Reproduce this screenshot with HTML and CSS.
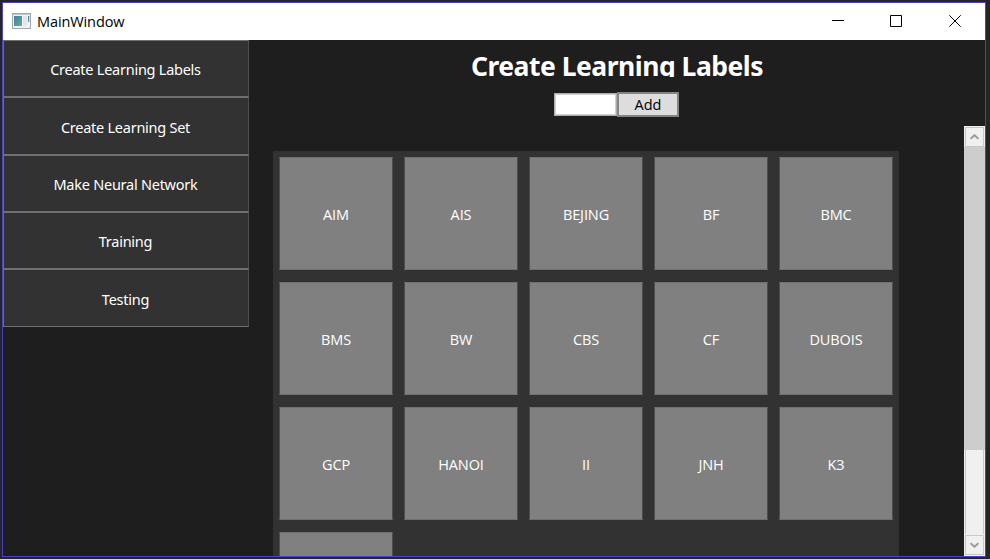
FILE: index.html
```html
<!DOCTYPE html>
<html lang="en">
<head>
<meta charset="utf-8">
<title>MainWindow</title>
<link rel="stylesheet" href="styles.css">
</head>
<body>
<div class="window">
  <header class="titlebar">
    <svg class="app-icon" width="19" height="16" viewBox="0 0 19 16">
      <defs><linearGradient id="g" x1="0" y1="0" x2="1" y2="1"><stop offset="0" stop-color="#4a78b0"/><stop offset="1" stop-color="#5cb87c"/></linearGradient></defs>
      <rect x=".5" y=".5" width="18" height="15" fill="#f1f1f3" stroke="#a3a8ae"/>
      <rect x="1" y="1" width="17" height="1" fill="#c4c8cc"/>
      <rect x="2" y="3" width="8" height="10" fill="url(#g)"/>
      <rect x="11" y="3" width="4" height="10" fill="#e4e5e8"/>
      <rect x="16" y="3" width="1.3" height="6" fill="url(#g)"/>
    </svg>
    <span class="title">MainWindow</span>
    <div class="controls">
      <svg width="12" height="12" viewBox="0 0 12 12"><path d="M0 5.5h12"/></svg>
      <svg width="12" height="12" viewBox="0 0 12 12"><path d="M.5.5h11v11H.5z"/></svg>
      <svg class="close" width="12" height="12" viewBox="0 0 12 12"><path d="M.3.3l11.4 11.4M11.7.3L.3 11.7"/></svg>
    </div>
  </header>
  <div class="body">
    <nav class="sidebar">
      <button>Create Learning Labels</button>
      <button>Create Learning Set</button>
      <button>Make Neural Network</button>
      <button>Training</button>
      <button>Testing</button>
    </nav>
    <main class="content">
      <h1>Create Learning Labels</h1>
      <div class="add-row"><input type="text" aria-label="Label"><button class="add">Add</button></div>
      <div class="scroll-area">
        <div class="grid">
          <div class="tile">AIM</div><div class="tile">AIS</div><div class="tile">BEJING</div><div class="tile">BF</div><div class="tile">BMC</div>
          <div class="tile">BMS</div><div class="tile">BW</div><div class="tile">CBS</div><div class="tile">CF</div><div class="tile">DUBOIS</div>
          <div class="tile">GCP</div><div class="tile">HANOI</div><div class="tile">II</div><div class="tile">JNH</div><div class="tile">K3</div>
          <div class="tile"></div>
        </div>
        <div class="scrollbar">
          <div class="arrow"><svg width="9" height="6" viewBox="0 0 9 6"><path d="M.5 4.8L4.5 1.2l4 3.6"/></svg></div>
          <div class="thumb"></div>
          <div class="track"></div>
          <div class="arrow"><svg width="9" height="6" viewBox="0 0 9 6"><path d="M.5 1.2l4 3.6 4-3.6"/></svg></div>
        </div>
      </div>
    </main>
  </div>
</div>
</body>
</html>
```
FILE: styles.css
```css
* { box-sizing: border-box; }
body {
  margin: 0;
  width: 990px;
  height: 559px;
  padding: 2px;
  overflow: hidden;
  background: #252526;
  font-family: "Noto Sans", "Open Sans", sans-serif;
  font-size: 14.5px;
  letter-spacing: -0.25px;
  color: #fff;
}
.window {
  width: 984px;
  height: 555px;
  border: 1px solid #4a41c8;
  background: #1e1e1e;
  display: flex;
  flex-direction: column;
  overflow: hidden;
}
.titlebar {
  flex: 0 0 37px;
  background: #fff;
  color: #000;
  display: flex;
  align-items: center;
  padding: 0 24px 2px 9px;
}
.app-icon { margin-top: 1px; }
.title { margin-left: 6px; font-family: "Open Sans", sans-serif; letter-spacing: -0.1px; padding-top: 1px; }
.controls { margin-left: auto; display: flex; gap: 46px; }
.controls svg { fill: none; stroke: #000; stroke-width: 1; }
.controls .close { margin-left: 1px; }
.body { flex: 1; display: flex; min-height: 0; }
.sidebar { flex: 0 0 246px; display: flex; flex-direction: column; }
.sidebar button {
  height: 57.35px;
  padding: 1px 1px 0 0;
  border: 1px solid #707070;
  border-right-color: #4d4d4d;
  background: #323232;
  color: #fff;
  font: inherit;
  letter-spacing: inherit;
}
.content { flex: 1; display: flex; flex-direction: column; align-items: center; min-width: 0; }
h1 {
  margin: 7px 0 0;
  height: 30px;
  line-height: 38px;
  overflow: hidden;
  font-size: 26.5px;
  font-weight: 700;
  letter-spacing: -0.5px;
  white-space: nowrap;
}
.add-row { display: flex; align-items: center; margin: 15px 1px 9px 0; height: 25px; }
.add-row input { width: 63px; height: 23px; border: 1px solid #abadb3; outline: 1px solid #d0d0d2; outline-offset: -2px; background: #fff; padding: 0; }
.add {
  width: 62px;
  height: 25px;
  padding: 0;
  border: 2px solid #848484;
  background: #ddd;
  color: #000;
  font-family: "Open Sans", sans-serif;
  font-size: 14.5px;
  line-height: 20px;
}
.scroll-area { flex: 1; width: 100%; display: flex; justify-content: space-between; min-height: 0; overflow: hidden; }
.grid {
  margin: 25px 0 0 24px;
  width: 626px;
  height: 520px;
  padding: 6px;
  background: #323232;
  display: grid;
  grid-template-columns: repeat(5, 114px);
  grid-auto-rows: 113px;
  column-gap: 11px;
  row-gap: 12px;
  align-content: start;
}
.tile {
  display: flex;
  align-items: center;
  justify-content: center;
  padding-top: 2px;
  background: #808080;
  border: 1px solid #707070;
  border-left-color: #4d4d4d;
  border-right-color: #4d4d4d;
  font-family: "Open Sans", sans-serif;
  letter-spacing: -0.1px;
}
.scrollbar { width: 21px; display: flex; flex-direction: column; background: #f0f0f0; }
.arrow { flex: 0 0 20px; margin: 1px 1px 0; border: 1px solid #c8c8c8; display: flex; align-items: center; justify-content: center; }
.arrow:last-child { margin: 1px; }
.arrow svg { fill: none; stroke: #9c9c9c; stroke-width: 2; }
.thumb { flex: 0 0 303px; background: #cdcdcd; }
.track { flex: 1; margin: 0 1px; border: solid #c8c8c8; border-width: 0 1px; }
```
